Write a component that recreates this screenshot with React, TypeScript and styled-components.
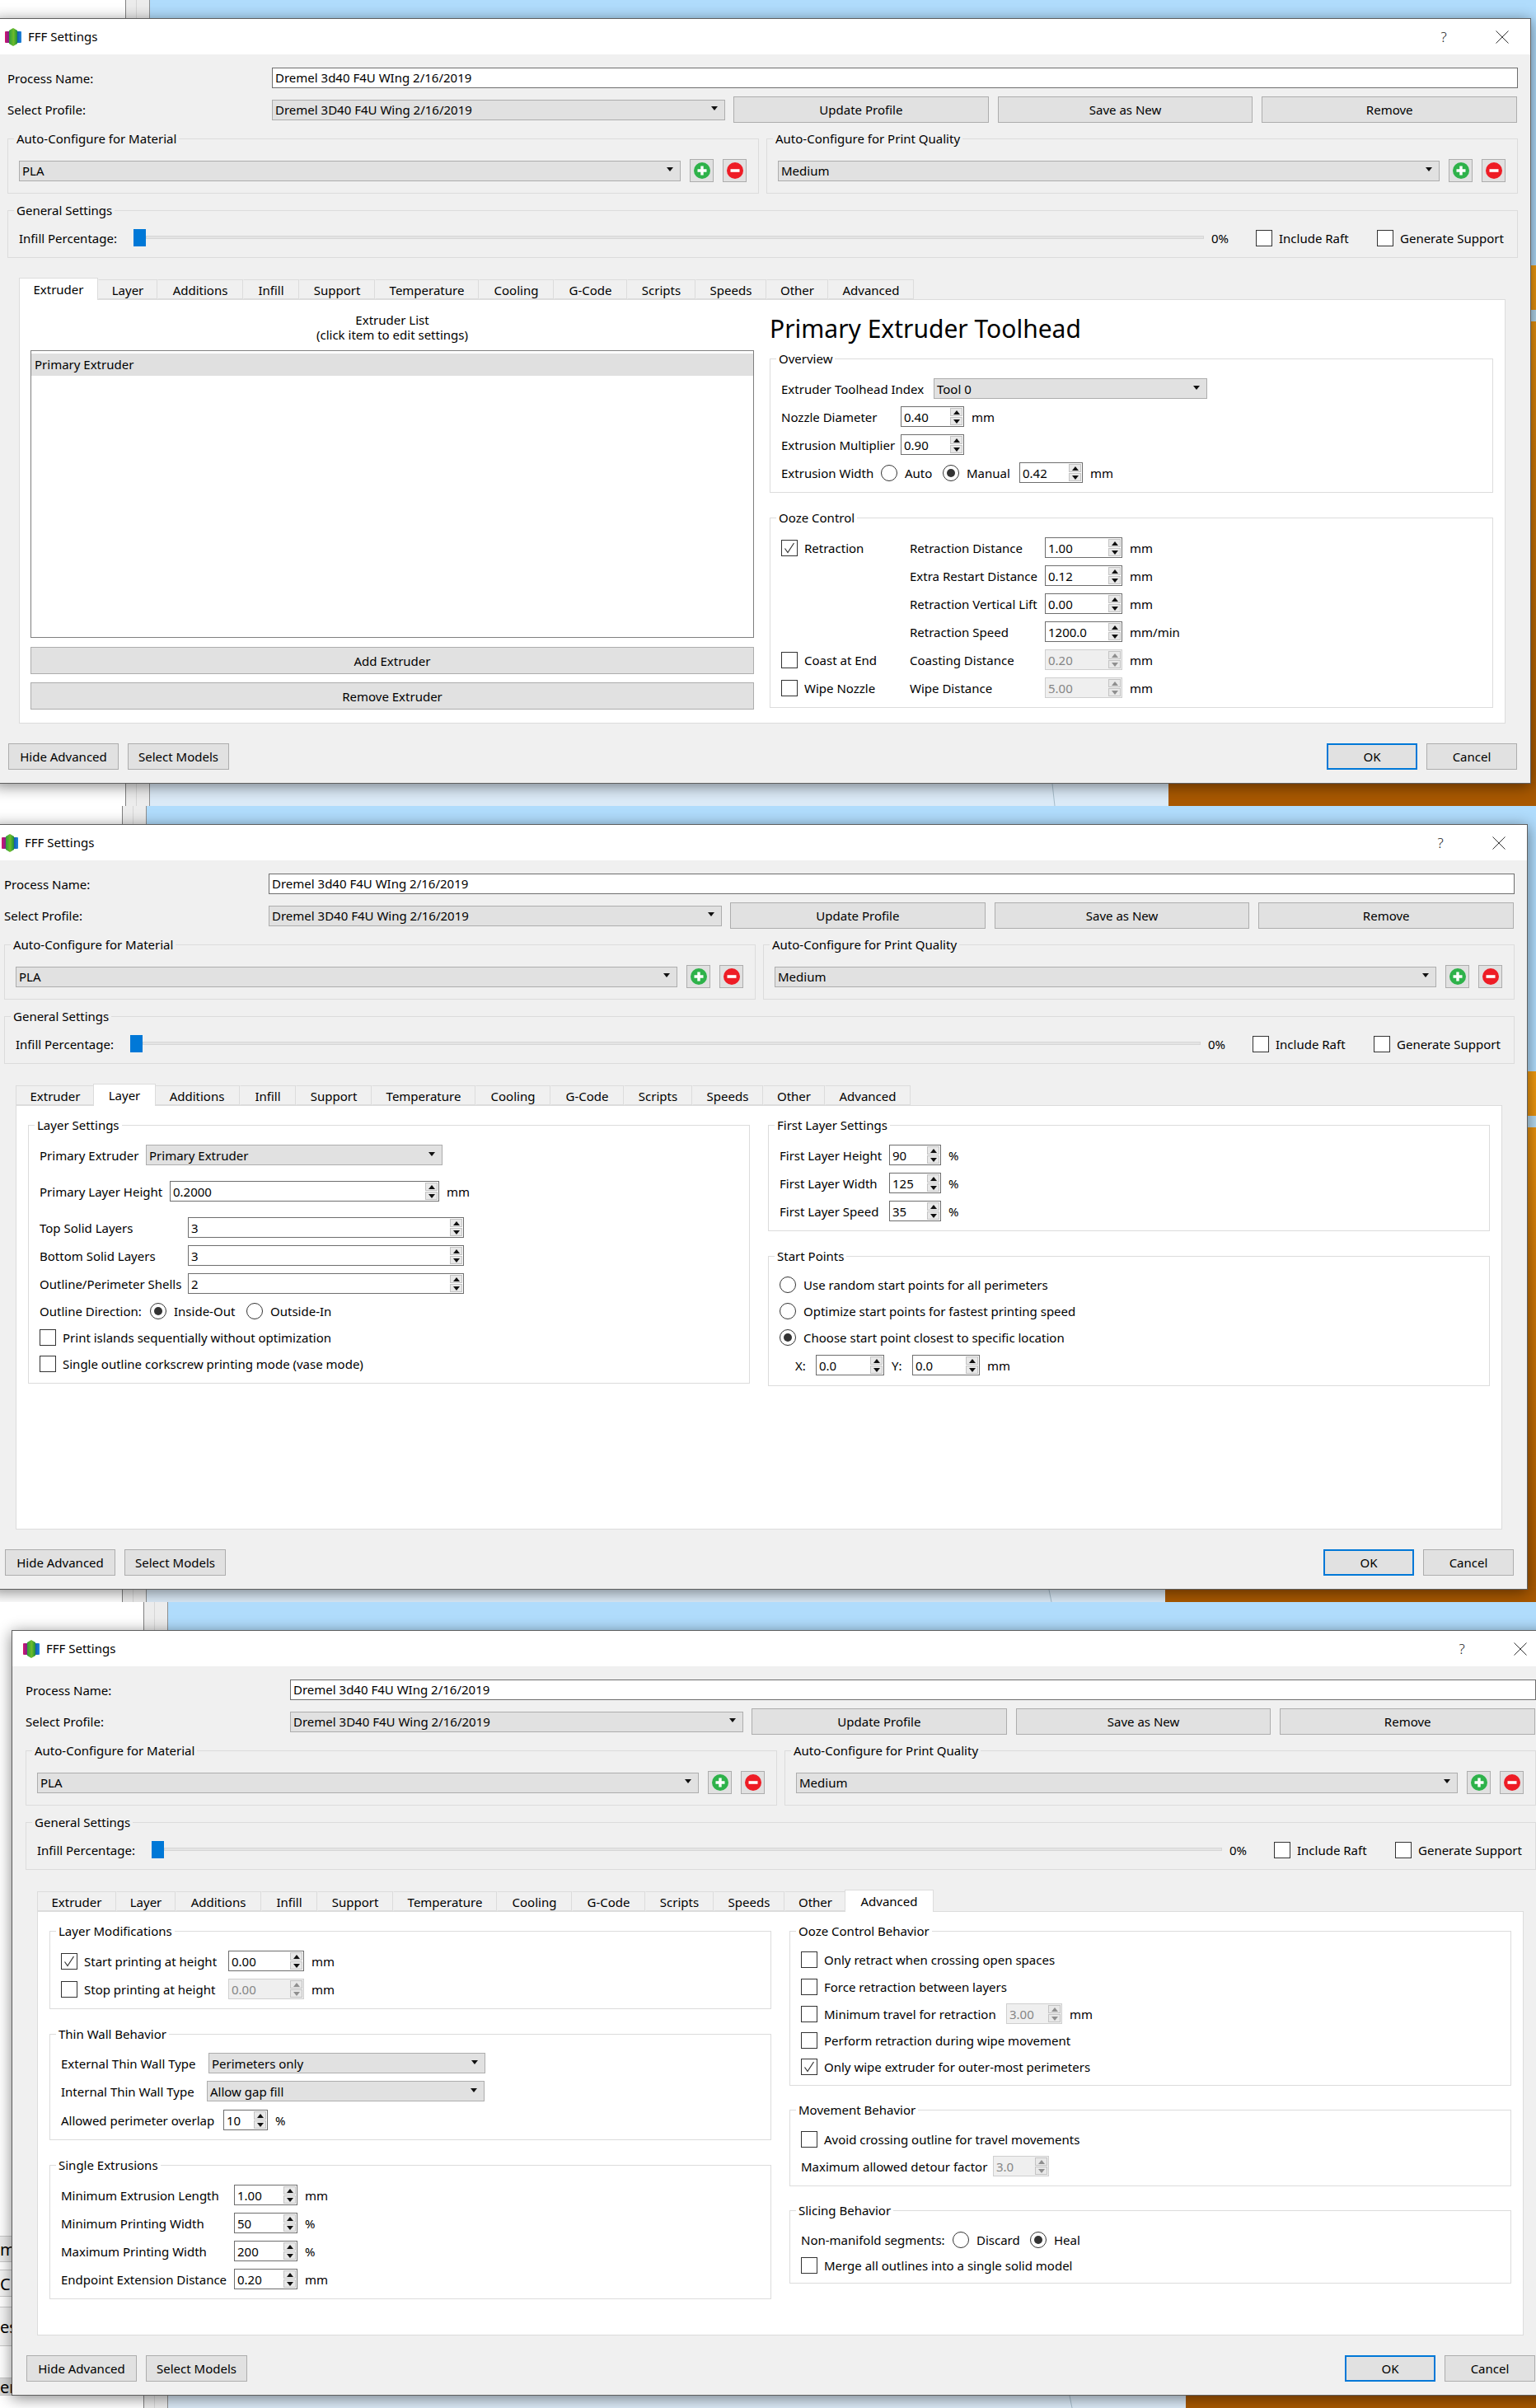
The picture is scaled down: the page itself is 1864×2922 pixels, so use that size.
import React from "react";
import styled, { createGlobalStyle } from "styled-components";

const Global = createGlobalStyle`
  html, body { margin: 0; padding: 0; background: #fff; overflow: hidden; }
  * { box-sizing: border-box; }
  body { font-family: "Noto Sans", "Open Sans", sans-serif; font-size: 15px; color: #000; }
`;

const Desktop = styled.div`
  width: 1864px;
  height: 2922px;
  overflow: hidden;
  display: flex;
  flex-direction: column;
`;

const Shot = styled.section<{ $h: number; $left: number }>`
  position: relative;
  height: ${(p) => p.$h}px;
  flex: none;
  overflow: hidden;
  display: grid;
  grid-template-columns: ${(p) => p.$left}px 30px 1fr;
`;

const SidePanel = styled.div<{ $pt?: number }>`
  background: #fff;
  padding-top: ${(p) => p.$pt ?? 0}px;
  display: flex;
  flex-direction: column;
  overflow: hidden;
`;

const SideRow = styled.div<{ $h: number; $mt: number; $tone: string }>`
  height: ${(p) => p.$h}px;
  margin-top: ${(p) => p.$mt}px;
  background: ${(p) => p.$tone};
  border-top: 1px solid #c9c9c9;
  border-bottom: 1px solid #c9c9c9;
  font-size: 20px;
  line-height: ${(p) => p.$h}px;
  white-space: nowrap;
  flex: none;
`;

const Gutter = styled.div`
  background: linear-gradient(90deg, #ececec 0 12px, #d6d6d6 12px 13px, #ececec 13px);
  border-left: 1px solid #808080;
  border-right: 1px solid #8f8f8f;
`;

const Viewport = styled.div`
  background: #b0dcfc;
  min-width: 0;
`;

const SceneSvg = styled.svg`
  display: block;
  width: 100%;
  height: 100%;
`;

const Scene = ({ left, h, bottom, orangeX, lineX, edge }: { left: number; h: number; bottom: number; orangeX: number; lineX: number; edge: boolean }) => {
  const origin = left + 30;
  const w = 1864 - origin;
  return (
    <SceneSvg viewBox={`0 0 ${w} ${h}`} preserveAspectRatio="none">
      <defs>
        <linearGradient id={`edge${left}`} x1="0" y1="0" x2="0" y2="1">
          <stop offset="0" stopColor="#f09a10" />
          <stop offset="0.35" stopColor="#d17a08" />
          <stop offset="1" stopColor="#a85800" />
        </linearGradient>
      </defs>
      {edge && <rect x={w - 20} y={322} width={20} height={h - 322} fill={`url(#edge${left})`} />}
      {edge && <rect x={w - 20} y={376} width={20} height={14} fill="#b4d8ee" />}
      <rect x={0} y={bottom - 2} width={orangeX - origin} height={h - bottom + 2} fill="#dbeaf7" />
      <rect x={orangeX - origin} y={bottom - 2} width={w - orangeX + origin} height={h - bottom + 2} fill="#a85800" />
      <path d={`M${lineX - origin} ${bottom} L${lineX - origin + 3} ${h}`} stroke="#a6bccb" strokeWidth="1" fill="none" />
    </SceneSvg>
  );
};

const DialogWin = styled.div<{ $x: number; $y: number }>`
  position: absolute;
  left: ${(p) => p.$x}px;
  top: ${(p) => p.$y}px;
  width: 1866px;
  background: #f0f0f0;
  border: 1px solid #5f5f5f;
  box-shadow: 0 3px 17px rgba(0, 0, 0, 0.48);
`;

const TitleBar = styled.header`
  height: 43px;
  background: #fff;
  display: flex;
  align-items: center;
  padding: 0 4px 0 13px;
`;
const TitleText = styled.span`
  margin-left: 8px;
  line-height: 1;
  margin-top: -1px;
`;
const CaptionBtn = styled.span<{ $mr?: number }>`
  width: 60px;
  height: 30px;
  display: flex;
  align-items: center;
  justify-content: center;
  margin-right: ${(p) => p.$mr ?? 0}px;
  color: #222;
  font-weight: 300;
  font-size: 17px;
`;
const Spacer = styled.span`
  flex: 1;
`;

const Logo = () => (
  <svg width="20" height="22" viewBox="0 0 20 22">
    <defs>
      <linearGradient id="lgL" x1="0" y1="0" x2="1" y2="0">
        <stop offset="0" stopColor="#d6136e" />
        <stop offset="1" stopColor="#5a2a96" />
      </linearGradient>
      <linearGradient id="lgC" x1="0" y1="0" x2="1" y2="0">
        <stop offset="0" stopColor="#2f9e3a" />
        <stop offset="0.55" stopColor="#6dbb2a" />
        <stop offset="1" stopColor="#1f8f3a" />
      </linearGradient>
      <linearGradient id="lgR" x1="0" y1="0" x2="1" y2="0">
        <stop offset="0" stopColor="#14489c" />
        <stop offset="1" stopColor="#1e86dc" />
      </linearGradient>
    </defs>
    <path d="M1 4 H7 V18 H1 Q0 18 0 17 V5 Q0 4 1 4 Z" fill="url(#lgL)" />
    <path d="M13 4 H19 Q20 4 20 5 V17 Q20 18 19 18 H13 Z" fill="url(#lgR)" />
    <path d="M10 0 L15 3 V19 L10 22 L5 19 V3 Z" fill="url(#lgC)" />
  </svg>
);

const CloseIcon = () => (
  <svg width="16" height="16" viewBox="0 0 16 16">
    <path d="M0.5 0.5 L15.5 15.5 M15.5 0.5 L0.5 15.5" stroke="#333" strokeWidth="1" fill="none" />
  </svg>
);

const Body = styled.div`
  padding: 16px 15px 16px 16px;
`;

const NameRow = styled.div`
  display: grid;
  grid-template-columns: 321px 1fr;
  height: 25px;
  align-items: center;
`;
const TextInput = styled.div`
  height: 25px;
  background: #fff;
  border: 1px solid #6e6e6e;
  padding-left: 3px;
  line-height: 23px;
  white-space: nowrap;
`;
const ProfileRow = styled.div`
  display: grid;
  grid-template-columns: 321px 550px 1fr;
  height: 32px;
  margin-top: 10px;
  align-items: center;
`;
const ButtonStrip = styled.div`
  display: flex;
  gap: 11px;
  margin: 0 1px 0 10px;
`;
const Btn = styled.div<{ $w?: number; $h?: number; $primary?: boolean }>`
  ${(p) => (p.$w ? `width: ${p.$w}px; flex: none;` : "flex: 1;")}
  height: ${(p) => p.$h ?? 32}px;
  background: #e1e1e1;
  border: ${(p) => (p.$primary ? "2px solid #0078d7" : "1px solid #adadad")};
  display: flex;
  align-items: center;
  justify-content: center;
  white-space: nowrap;
`;

const Combo = styled.div<{ $w?: number; $h?: number }>`
  ${(p) => (p.$w ? `width: ${p.$w}px; flex: none;` : "")}
  height: ${(p) => p.$h ?? 25}px;
  background: #e1e1e1;
  border: 1px solid #adadad;
  display: flex;
  align-items: center;
  padding: 0 8px 0 3px;
  white-space: nowrap;
`;
const ComboFill = styled(Combo)`
  flex: 1;
  min-width: 0;
`;
const ComboText = styled.span`
  flex: 1;
`;
const ComboArrow = styled.i`
  width: 0;
  height: 0;
  border-left: 4px solid transparent;
  border-right: 4px solid transparent;
  border-top: 5px solid #111;
  margin-top: -3px;
`;

const GroupGrid = styled.div`
  display: grid;
  grid-template-columns: 1fr 1fr;
  gap: 9px;
  margin-top: 9px;
`;
const Fieldset = styled.fieldset<{ $mt?: number }>`
  margin: ${(p) => p.$mt ?? 0}px 0 0;
  padding: 0;
  min-width: 0;
  border: 1px solid #dcdcdc;
`;
const Legend = styled.legend`
  margin-left: 7px;
  padding: 0 3px;
  line-height: 20px;
  height: 20px;
  white-space: nowrap;
`;
const GroupBody = styled.div<{ $pt: number; $pb: number; $pr?: number }>`
  padding: ${(p) => p.$pt}px ${(p) => p.$pr ?? 13}px ${(p) => p.$pb}px 13px;
`;
const Group = ({ title, mt, pt, pb, pr, children }: { title: string; mt?: number; pt: number; pb: number; pr?: number; children: React.ReactNode }) => (
  <Fieldset $mt={mt}>
    <Legend>{title}</Legend>
    <GroupBody $pt={pt} $pb={pb} $pr={pr}>
      {children}
    </GroupBody>
  </Fieldset>
);

const Row = styled.div<{ $h?: number; $mt?: number; $ml?: number }>`
  display: flex;
  align-items: center;
  flex: none;
  height: ${(p) => p.$h ?? 25}px;
  margin-top: ${(p) => p.$mt ?? 0}px;
  margin-left: ${(p) => p.$ml ?? 0}px;
`;
const ToolRow = styled(Row)`
  gap: 11px;
`;
const Field = styled.span<{ $w?: number }>`
  ${(p) => (p.$w ? `width: ${p.$w}px;` : "")}
  flex: none;
  white-space: nowrap;
`;
const SliderValue = styled.span`
  width: 63px;
  padding-left: 9px;
  flex: none;
  white-space: nowrap;
`;
const Unit = styled.span`
  margin-left: 9px;
  white-space: nowrap;
`;

const IconButton = styled.div`
  width: 29px;
  height: 28px;
  flex: none;
  background: #e1e1e1;
  border: 1px solid #adadad;
  display: flex;
  align-items: center;
  justify-content: center;
`;
const PlusIcon = () => (
  <svg width="20" height="20" viewBox="0 0 20 20">
    <circle cx="10" cy="10" r="10" fill="#2eb24a" />
    <path d="M10 4.5 V15.5 M4.5 10 H15.5" stroke="#fff" strokeWidth="3.4" />
  </svg>
);
const MinusIcon = () => (
  <svg width="20" height="20" viewBox="0 0 20 20">
    <circle cx="10" cy="10" r="10" fill="#ee1c25" />
    <path d="M4.5 10 H15.5" stroke="#fff" strokeWidth="3.6" />
  </svg>
);

const SliderRail = styled.div`
  flex: 1;
  min-width: 0;
  display: flex;
  align-items: center;
  height: 21px;
`;
const SliderThumb = styled.div`
  width: 15px;
  height: 21px;
  background: #0078d7;
  flex: none;
`;
const SliderTrack = styled.div`
  flex: 1;
  height: 4px;
  background: #e4e4e4;
  border: 1px solid #d6d6d6;
  margin-top: -1px;
`;

const TabBar = styled.nav`
  display: flex;
  align-items: flex-end;
  height: 26px;
  margin: 24px 0 0 14px;
  position: relative;
  z-index: 1;
`;
const Tab = styled.div<{ $w: number; $active: boolean; $first: boolean }>`
  width: ${(p) => p.$w + (p.$active && !p.$first ? 4 : 0)}px;
  flex: none;
  height: ${(p) => (p.$active ? 27 : 24)}px;
  margin: 0 ${(p) => (p.$active && !p.$first ? -2 : 0)}px ${(p) => (p.$active ? -1 : 0)}px;
  padding-top: ${(p) => (p.$active ? 0 : 1)}px;
  background: ${(p) => (p.$active ? "#fff" : "#f0f0f0")};
  border: 1px solid #dcdcdc;
  border-bottom: ${(p) => (p.$active ? "none" : "1px solid #dcdcdc")};
  border-left-color: ${(p) => (p.$first || p.$active ? "#dcdcdc" : "transparent")};
  position: relative;
  z-index: ${(p) => (p.$active ? 2 : 1)};
  display: flex;
  align-items: center;
  justify-content: center;
  white-space: nowrap;
`;

const Pane = styled.div<{ $pad: number; $pt: number; $gap: number }>`
  height: 515px;
  margin: 0 0 0 14px;
  width: 1804px;
  background: #fff;
  border: 1px solid #dcdcdc;
  padding: ${(p) => p.$pt}px 14px 0 ${(p) => p.$pad}px;
  display: grid;
  grid-template-columns: 1fr 1fr;
  column-gap: ${(p) => p.$gap}px;
  align-content: start;
`;
const Column = styled.div`
  display: flex;
  flex-direction: column;
  min-width: 0;
`;

const Footer = styled.footer`
  display: flex;
  align-items: center;
  gap: 11px;
  margin: 24px 1px 0 1px;
`;
const FooterGap = styled.span`
  flex: 1;
`;

const Box = styled.span`
  width: 20px;
  height: 20px;
  flex: none;
  background: #fff;
  border: 1px solid #333;
  display: inline-flex;
  align-items: center;
  justify-content: center;
`;
const CheckWrap = styled.span<{ $w?: number }>`
  display: inline-flex;
  align-items: center;
  flex: none;
  white-space: nowrap;
  gap: 8px;
  ${(p) => (p.$w ? `width: ${p.$w}px;` : "")}
`;
const Check = ({ on, w, children }: { on?: boolean; w?: number; children?: React.ReactNode }) => (
  <CheckWrap $w={w}>
    <Box>
      {on && (
        <svg width="16" height="16" viewBox="0 0 16 16">
          <path d="M2.5 8.5 L6 13.5 L13.5 2" stroke="#333" strokeWidth="1.2" fill="none" />
        </svg>
      )}
    </Box>
    {children}
  </CheckWrap>
);

const Dot = styled.span<{ $on?: boolean }>`
  width: 20px;
  height: 20px;
  flex: none;
  border-radius: 50%;
  background: #fff;
  border: 1px solid #333;
  display: inline-flex;
  align-items: center;
  justify-content: center;
  &::after {
    content: "";
    width: 10px;
    height: 10px;
    border-radius: 50%;
    background: ${(p) => (p.$on ? "#333" : "transparent")};
  }
`;
const RadioWrap = styled.span<{ $w?: number }>`
  display: inline-flex;
  align-items: center;
  flex: none;
  white-space: nowrap;
  gap: 9px;
  ${(p) => (p.$w ? `width: ${p.$w}px;` : "")}
`;
const Radio = ({ on, w, children }: { on?: boolean; w?: number; children: React.ReactNode }) => (
  <RadioWrap $w={w}>
    <Dot $on={on} />
    {children}
  </RadioWrap>
);

const SpinFrame = styled.div<{ $w: number; $off?: boolean }>`
  width: ${(p) => p.$w}px;
  height: 25px;
  flex: none;
  background: ${(p) => (p.$off ? "#efefef" : "#fff")};
  border: 1px solid ${(p) => (p.$off ? "#cfcfcf" : "#6e6e6e")};
  color: ${(p) => (p.$off ? "#858585" : "#000")};
  display: flex;
  align-items: center;
  padding: 1px;
`;
const SpinValue = styled.span`
  flex: 1;
  padding-left: 2px;
  white-space: nowrap;
`;
const SpinArrows = styled.span`
  width: 15px;
  height: 100%;
  flex: none;
  display: flex;
  flex-direction: column;
  gap: 1px;
`;
const SpinBtn = styled.span<{ $up?: boolean; $off?: boolean }>`
  flex: 1;
  background: #e8e8e8;
  border: 1px solid #c4c4c4;
  display: flex;
  align-items: center;
  justify-content: center;
  &::after {
    content: "";
    width: 0;
    height: 0;
    border-left: 4px solid transparent;
    border-right: 4px solid transparent;
    ${(p) => (p.$up ? "border-bottom" : "border-top")}: 5px solid ${(p) => (p.$off ? "#8f8f8f" : "#111")};
  }
`;
const Spin = ({ w, value, off }: { w: number; value: string; off?: boolean }) => (
  <SpinFrame $w={w} $off={off}>
    <SpinValue>{value}</SpinValue>
    <SpinArrows>
      <SpinBtn $up $off={off} />
      <SpinBtn $off={off} />
    </SpinArrows>
  </SpinFrame>
);

const ListCaption = styled.div`
  text-align: center;
  line-height: 18px;
  height: 36px;
`;
const ListBox = styled.div`
  height: 349px;
  margin-top: 10px;
  background: #fff;
  border: 1px solid #7f7f7f;
  padding-top: 3px;
`;
const ListItem = styled.div`
  height: 27px;
  line-height: 26px;
  padding-left: 4px;
  background: #e0e0e0;
`;
const WideBtn = styled(Btn)<{ $mt: number }>`
  margin-top: ${(p) => p.$mt}px;
  flex: none;
`;
const Heading = styled.h2`
  margin: 0 0 6px;
  height: 40px;
  line-height: 40px;
  font-size: 30px;
  font-weight: 400;
  white-space: nowrap;
`;

const ExtruderPane = () => (
  <Pane $pad={13} $pt={15} $gap={19}>
    <Column>
      <ListCaption>
        Extruder List
        <br />
        (click item to edit settings)
      </ListCaption>
      <ListBox>
        <ListItem>Primary Extruder</ListItem>
      </ListBox>
      <WideBtn $h={33} $mt={11}>Add Extruder</WideBtn>
      <WideBtn $h={33} $mt={10}>Remove Extruder</WideBtn>
    </Column>
    <Column>
      <Heading>Primary Extruder Toolhead</Heading>
      <Group title="Overview" pt={14} pb={11}>
        <Row>
          <Field $w={185}>Extruder Toolhead Index</Field>
          <Combo $w={332}>
            <ComboText>Tool 0</ComboText>
            <ComboArrow />
          </Combo>
        </Row>
        <Row $mt={9}>
          <Field $w={145}>Nozzle Diameter</Field>
          <Spin w={77} value="0.40" />
          <Unit>mm</Unit>
        </Row>
        <Row $mt={9}>
          <Field $w={145}>Extrusion Multiplier</Field>
          <Spin w={77} value="0.90" />
        </Row>
        <Row $mt={9}>
          <Field $w={121}>Extrusion Width</Field>
          <Radio w={75}>Auto</Radio>
          <Radio on w={93}>Manual</Radio>
          <Spin w={77} value="0.42" />
          <Unit>mm</Unit>
        </Row>
      </Group>
      <Group title="Ooze Control" mt={20} pt={14} pb={11}>
        <Row>
          <Check on w={156}>Retraction</Check>
          <Field $w={164}>Retraction Distance</Field>
          <Spin w={94} value="1.00" />
          <Unit>mm</Unit>
        </Row>
        <Row $mt={9} $ml={156}>
          <Field $w={164}>Extra Restart Distance</Field>
          <Spin w={94} value="0.12" />
          <Unit>mm</Unit>
        </Row>
        <Row $mt={9} $ml={156}>
          <Field $w={164}>Retraction Vertical Lift</Field>
          <Spin w={94} value="0.00" />
          <Unit>mm</Unit>
        </Row>
        <Row $mt={9} $ml={156}>
          <Field $w={164}>Retraction Speed</Field>
          <Spin w={94} value="1200.0" />
          <Unit>mm/min</Unit>
        </Row>
        <Row $mt={9}>
          <Check w={156}>Coast at End</Check>
          <Field $w={164}>Coasting Distance</Field>
          <Spin w={94} value="0.20" off />
          <Unit>mm</Unit>
        </Row>
        <Row $mt={9}>
          <Check w={156}>Wipe Nozzle</Check>
          <Field $w={164}>Wipe Distance</Field>
          <Spin w={94} value="5.00" off />
          <Unit>mm</Unit>
        </Row>
      </Group>
    </Column>
  </Pane>
);

const LayerPane = () => (
  <Pane $pad={14} $pt={13} $gap={22}>
    <Column>
      <Group title="Layer Settings" pt={14} pb={13}>
        <Row>
          <Field $w={129}>Primary Extruder</Field>
          <Combo $w={360}>
            <ComboText>Primary Extruder</ComboText>
            <ComboArrow />
          </Combo>
        </Row>
        <Row $mt={19}>
          <Field $w={158}>Primary Layer Height</Field>
          <Spin w={327} value="0.2000" />
          <Unit>mm</Unit>
        </Row>
        <Row $mt={19}>
          <Field $w={180}>Top Solid Layers</Field>
          <Spin w={335} value="3" />
        </Row>
        <Row $mt={9}>
          <Field $w={180}>Bottom Solid Layers</Field>
          <Spin w={335} value="3" />
        </Row>
        <Row $mt={9}>
          <Field $w={180}>Outline/Perimeter Shells</Field>
          <Spin w={335} value="2" />
        </Row>
        <Row $h={20} $mt={11}>
          <Field $w={134}>Outline Direction:</Field>
          <Radio on w={117}>Inside-Out</Radio>
          <Radio>Outside-In</Radio>
        </Row>
        <Row $h={20} $mt={12}>
          <Check>Print islands sequentially without optimization</Check>
        </Row>
        <Row $h={20} $mt={12}>
          <Check>Single outline corkscrew printing mode (vase mode)</Check>
        </Row>
      </Group>
    </Column>
    <Column>
      <Group title="First Layer Settings" pt={14} pb={11}>
        <Row>
          <Field $w={133}>First Layer Height</Field>
          <Spin w={63} value="90" />
          <Unit>%</Unit>
        </Row>
        <Row $mt={9}>
          <Field $w={133}>First Layer Width</Field>
          <Spin w={63} value="125" />
          <Unit>%</Unit>
        </Row>
        <Row $mt={9}>
          <Field $w={133}>First Layer Speed</Field>
          <Spin w={63} value="35" />
          <Unit>%</Unit>
        </Row>
      </Group>
      <Group title="Start Points" mt={20} pt={15} pb={12}>
        <Row $h={20}>
          <Radio>Use random start points for all perimeters</Radio>
        </Row>
        <Row $h={20} $mt={12}>
          <Radio>Optimize start points for fastest printing speed</Radio>
        </Row>
        <Row $h={20} $mt={12}>
          <Radio on>Choose start point closest to specific location</Radio>
        </Row>
        <Row $mt={11} $ml={19}>
          <Field $w={25}>X:</Field>
          <Spin w={83} value="0.0" />
          <Field $w={34}>
            <Unit>Y:</Unit>
          </Field>
          <Spin w={82} value="0.0" />
          <Unit>mm</Unit>
        </Row>
      </Group>
    </Column>
  </Pane>
);

const AdvancedPane = () => (
  <Pane $pad={14} $pt={13} $gap={22}>
    <Column>
      <Group title="Layer Modifications" pt={14} pb={11}>
        <Row>
          <Check on w={203}>Start printing at height</Check>
          <Spin w={92} value="0.00" />
          <Unit>mm</Unit>
        </Row>
        <Row $mt={9}>
          <Check w={203}>Stop printing at height</Check>
          <Spin w={92} value="0.00" off />
          <Unit>mm</Unit>
        </Row>
      </Group>
      <Group title="Thin Wall Behavior" mt={20} pt={13} pb={11}>
        <Row>
          <Field $w={179}>External Thin Wall Type</Field>
          <Combo $w={336}>
            <ComboText>Perimeters only</ComboText>
            <ComboArrow />
          </Combo>
        </Row>
        <Row $mt={9}>
          <Field $w={177}>Internal Thin Wall Type</Field>
          <Combo $w={337}>
            <ComboText>Allow gap fill</ComboText>
            <ComboArrow />
          </Combo>
        </Row>
        <Row $mt={10}>
          <Field $w={197}>Allowed perimeter overlap</Field>
          <Spin w={54} value="10" />
          <Unit>%</Unit>
        </Row>
      </Group>
      <Group title="Single Extrusions" mt={20} pt={14} pb={11}>
        <Row>
          <Field $w={210}>Minimum Extrusion Length</Field>
          <Spin w={77} value="1.00" />
          <Unit>mm</Unit>
        </Row>
        <Row $mt={9}>
          <Field $w={210}>Minimum Printing Width</Field>
          <Spin w={77} value="50" />
          <Unit>%</Unit>
        </Row>
        <Row $mt={9}>
          <Field $w={210}>Maximum Printing Width</Field>
          <Spin w={77} value="200" />
          <Unit>%</Unit>
        </Row>
        <Row $mt={9}>
          <Field $w={210}>Endpoint Extension Distance</Field>
          <Spin w={77} value="0.20" />
          <Unit>mm</Unit>
        </Row>
      </Group>
    </Column>
    <Column>
      <Group title="Ooze Control Behavior" pt={12} pb={10}>
        <Row>
          <Check>Only retract when crossing open spaces</Check>
        </Row>
        <Row $mt={8}>
          <Check>Force retraction between layers</Check>
        </Row>
        <Row $mt={8}>
          <Check w={249}>Minimum travel for retraction</Check>
          <Spin w={68} value="3.00" off />
          <Unit>mm</Unit>
        </Row>
        <Row $mt={7}>
          <Check>Perform retraction during wipe movement</Check>
        </Row>
        <Row $mt={7}>
          <Check on>Only wipe extruder for outer-most perimeters</Check>
        </Row>
      </Group>
      <Group title="Movement Behavior" mt={19} pt={13} pb={11}>
        <Row>
          <Check>Avoid crossing outline for travel movements</Check>
        </Row>
        <Row $mt={8}>
          <Field $w={233}>Maximum allowed detour factor</Field>
          <Spin w={68} value="3.0" off />
        </Row>
      </Group>
      <Group title="Slicing Behavior" mt={19} pt={13} pb={9}>
        <Row>
          <Field $w={184}>Non-manifold segments:</Field>
          <Radio w={94}>Discard</Radio>
          <Radio on>Heal</Radio>
        </Row>
        <Row $mt={6}>
          <Check>Merge all outlines into a single solid model</Check>
        </Row>
      </Group>
    </Column>
  </Pane>
);

const tabs: [string, number][] = [
  ["Extruder", 96],
  ["Layer", 72],
  ["Additions", 104],
  ["Infill", 68],
  ["Support", 92],
  ["Temperature", 126],
  ["Cooling", 91],
  ["G-Code", 89],
  ["Scripts", 83],
  ["Speeds", 86],
  ["Other", 75],
  ["Advanced", 104],
];

const Dialog = ({ x, y, active, children }: { x: number; y: number; active: string; children: React.ReactNode }) => (
  <DialogWin $x={x} $y={y}>
    <TitleBar>
      <Logo />
      <TitleText>FFF Settings</TitleText>
      <Spacer />
      <CaptionBtn $mr={11}>?</CaptionBtn>
      <CaptionBtn>
        <CloseIcon />
      </CaptionBtn>
    </TitleBar>
    <Body>
      <NameRow>
        <span>Process Name:</span>
        <TextInput>Dremel 3d40 F4U WIng 2/16/2019</TextInput>
      </NameRow>
      <ProfileRow>
        <span>Select Profile:</span>
        <Combo>
          <ComboText>Dremel 3D40 F4U Wing 2/16/2019</ComboText>
          <ComboArrow />
        </Combo>
        <ButtonStrip>
          <Btn>Update Profile</Btn>
          <Btn>Save as New</Btn>
          <Btn>Remove</Btn>
        </ButtonStrip>
      </ProfileRow>
      <GroupGrid>
        <Group title="Auto-Configure for Material" pt={15} pb={13} pr={14}>
          <ToolRow $h={28}>
            <ComboFill>
              <ComboText>PLA</ComboText>
              <ComboArrow />
            </ComboFill>
            <IconButton>
              <PlusIcon />
            </IconButton>
            <IconButton>
              <MinusIcon />
            </IconButton>
          </ToolRow>
        </Group>
        <Group title="Auto-Configure for Print Quality" pt={15} pb={13} pr={14}>
          <ToolRow $h={28}>
            <ComboFill>
              <ComboText>Medium</ComboText>
              <ComboArrow />
            </ComboFill>
            <IconButton>
              <PlusIcon />
            </IconButton>
            <IconButton>
              <MinusIcon />
            </IconButton>
          </ToolRow>
        </Group>
      </GroupGrid>
      <Group title="General Settings" mt={10} pt={13} pb={13} pr={18}>
        <Row $h={21}>
          <Field $w={139}>Infill Percentage:</Field>
          <SliderRail>
            <SliderThumb />
            <SliderTrack />
          </SliderRail>
          <SliderValue>0%</SliderValue>
          <Check w={147}>Include Raft</Check>
          <Check w={152}>Generate Support</Check>
        </Row>
      </Group>
      <TabBar>
        {tabs.map(([name, w], i) => (
          <Tab key={name} $w={w} $active={name === active} $first={i === 0}>
            {name}
          </Tab>
        ))}
      </TabBar>
      {children}
      <Footer>
        <Btn $w={134}>Hide Advanced</Btn>
        <Btn $w={123}>Select Models</Btn>
        <FooterGap />
        <Btn $w={110} $primary>OK</Btn>
        <Btn $w={110}>Cancel</Btn>
      </Footer>
    </Body>
  </DialogWin>
);

export default function App() {
  return (
    <Desktop>
      <Global />
      <Shot $h={978} $left={152}>
        <SidePanel />
        <Gutter />
        <Viewport>
          <Scene left={152} h={978} bottom={951} orangeX={1418} lineX={1277} edge />
        </Viewport>
        <Dialog x={-8} y={22} active="Extruder">
          <ExtruderPane />
        </Dialog>
      </Shot>
      <Shot $h={966} $left={148}>
        <SidePanel />
        <Gutter />
        <Viewport>
          <Scene left={148} h={966} bottom={951} orangeX={1414} lineX={1273} edge />
        </Viewport>
        <Dialog x={-12} y={22} active="Layer">
          <LayerPane />
        </Dialog>
      </Shot>
      <Shot $h={978} $left={174}>
        <SidePanel $pt={769}>
          <SideRow $h={32} $mt={0} $tone="#ececec">mp</SideRow>
          <SideRow $h={33} $mt={9} $tone="#f4f4f4">C</SideRow>
          <SideRow $h={48} $mt={12} $tone="#f4f4f4">es</SideRow>
          <SideRow $h={22} $mt={38} $tone="#dcdcdc">en</SideRow>
        </SidePanel>
        <Gutter />
        <Viewport>
          <Scene left={174} h={978} bottom={963} orangeX={1439} lineX={1298} edge={false} />
        </Viewport>
        <Dialog x={14} y={34} active="Advanced">
          <AdvancedPane />
        </Dialog>
      </Shot>
    </Desktop>
  );
}
